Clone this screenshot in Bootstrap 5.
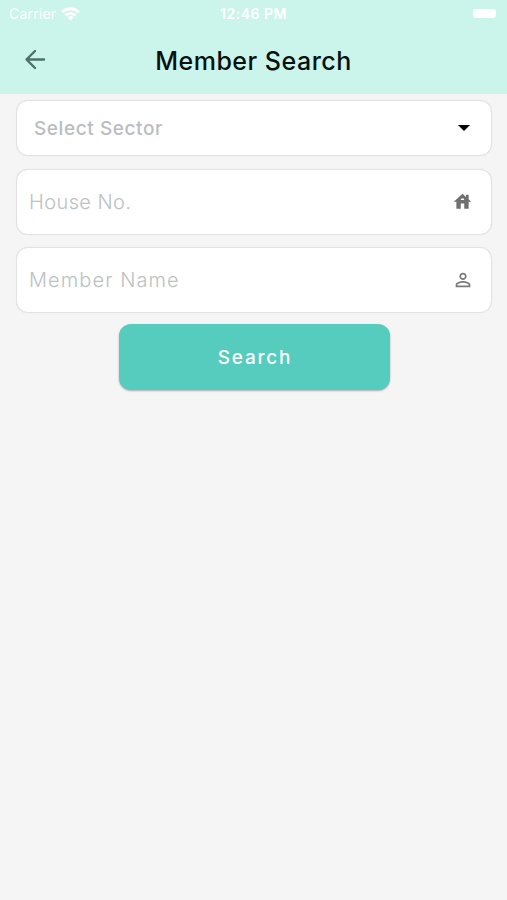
<!DOCTYPE html>
<html lang="en">
<head>
<meta charset="utf-8">
<meta name="viewport" content="width=device-width, initial-scale=1">
<title>Member Search</title>
<link href="https://cdn.jsdelivr.net/npm/bootstrap@5.3.0/dist/css/bootstrap.min.css" rel="stylesheet">
<style>
body{background:#f5f5f5;font-family:Inter,"Liberation Sans",sans-serif;min-height:900px;overflow:hidden}
.top-bar{background:#cbf4ea;height:94px}
.status-bar{height:27px;padding:0 9px 0 9px;font-size:14px;line-height:27px}
.carrier{letter-spacing:.2px}
.clock{font-size:14px;letter-spacing:.5px}
.battery{width:23px;height:9px;border-radius:3px;margin-right:2px}
.title-bar{height:66px;padding:0 22px}
.page-title{font-size:25px;font-weight:450;letter-spacing:.5px;color:#07110f;line-height:30px;padding-top:1px}
.field-box{background:#fff;border:1px solid #e2e2e3;border-radius:12px;height:66px;padding:0 18px 0 12px;box-shadow:0 0 1px #ddd}
.sector-box{height:56px;padding:0 21px 0 17px;margin-bottom:1px}
.field-box input{font-size:20px;font-weight:300;letter-spacing:.4px;line-height:26px}
.field-box .wide-hint{letter-spacing:1.1px}
.field-box .person{margin-right:-1px}
.field-box input::placeholder{color:#bcc1c1;opacity:1}
.sector-label{font-size:19px;font-weight:500;letter-spacing:.58px;color:#babdbf;padding-top:2px}
.field-stack{padding:6px 15px 0 16px;gap:12px}
.search-btn,.search-btn:hover{width:271px;height:66px;border:0;border-radius:12px;background:#55ccbe;color:#fff;font-size:19px;font-weight:550;letter-spacing:1.8px;box-shadow:0 1px 2px rgba(0,0,0,.3);margin-top:-1px;padding:8px 12px 6px 14px}
</style>
</head>
<body>
<header class="top-bar">
  <div class="status-bar row g-0 align-items-center text-white">
    <div class="col d-flex align-items-center gap-1">
      <span class="carrier">Carrier</span>
      <svg width="20" height="14" viewBox="-1 0 21 14" fill="none" stroke="#fff" stroke-width="3"><path d="M1.2 5.1a12.5 12.5 0 0 1 17.6 0M4.6 8.5a7.7 7.7 0 0 1 10.8 0"/><path d="M10 13.8 6.9 10.7a4.4 4.4 0 0 1 6.2 0z" fill="#fff" stroke="none"/></svg>
    </div>
    <div class="col-auto clock fw-semibold">12:46 PM</div>
    <div class="col d-flex justify-content-end"><span class="battery bg-white"></span></div>
  </div>
  <div class="title-bar row g-0 align-items-center">
    <div class="col d-flex"><svg width="26" height="26" viewBox="0 0 26 26" fill="none" stroke="#4d7068" stroke-width="2.4" stroke-linecap="round" stroke-linejoin="round"><path d="M22 12.5H4.8M13 4 4.5 12.5 13 21"/></svg></div>
    <h1 class="col-auto page-title mb-0">Member Search</h1>
    <div class="col"></div>
  </div>
</header>
<main class="field-stack d-flex flex-column">
  <div class="field-box sector-box d-flex align-items-center justify-content-between">
    <span class="sector-label">Select Sector</span>
    <svg width="12" height="6" viewBox="0 0 12 6"><path d="M0 0h12L6 6z"/></svg>
  </div>
  <label class="field-box d-flex align-items-center">
    <input class="border-0 bg-transparent p-0 flex-grow-1" type="text" placeholder="House No.">
    <svg width="21" height="21" viewBox="0 1 24 24" fill="#707070"><path d="M19 9.3V4h-3v2.6L12 3 2 12h3v8h5v-6h4v6h5v-8h3l-3-2.7zM10 10c0-1.1.9-2 2-2s2 .9 2 2h-4z"/></svg>
  </label>
  <label class="field-box d-flex align-items-center">
    <input class="wide-hint border-0 bg-transparent p-0 flex-grow-1" type="text" placeholder="Member Name">
    <svg class="person" width="22" height="22" viewBox="0 0 24 24" fill="#7b7b7b"><path d="M12 5.9a2.1 2.1 0 1 1 0 4.2 2.1 2.1 0 0 1 0-4.2m0 9c2.97 0 6.1 1.46 6.1 2.1v1.1H5.9V17c0-.64 3.13-2.1 6.1-2.1M12 4C9.79 4 8 5.79 8 8s1.79 4 4 4 4-1.79 4-4-1.79-4-4-4zm0 9c-2.67 0-8 1.34-8 4v3h16v-3c0-2.66-5.33-4-8-4z"/></svg>
  </label>
  <button class="btn search-btn align-self-center" type="button">Search</button>
</main>
<script src="https://cdn.jsdelivr.net/npm/bootstrap@5.3.0/dist/js/bootstrap.bundle.min.js"></script>
</body>
</html>
